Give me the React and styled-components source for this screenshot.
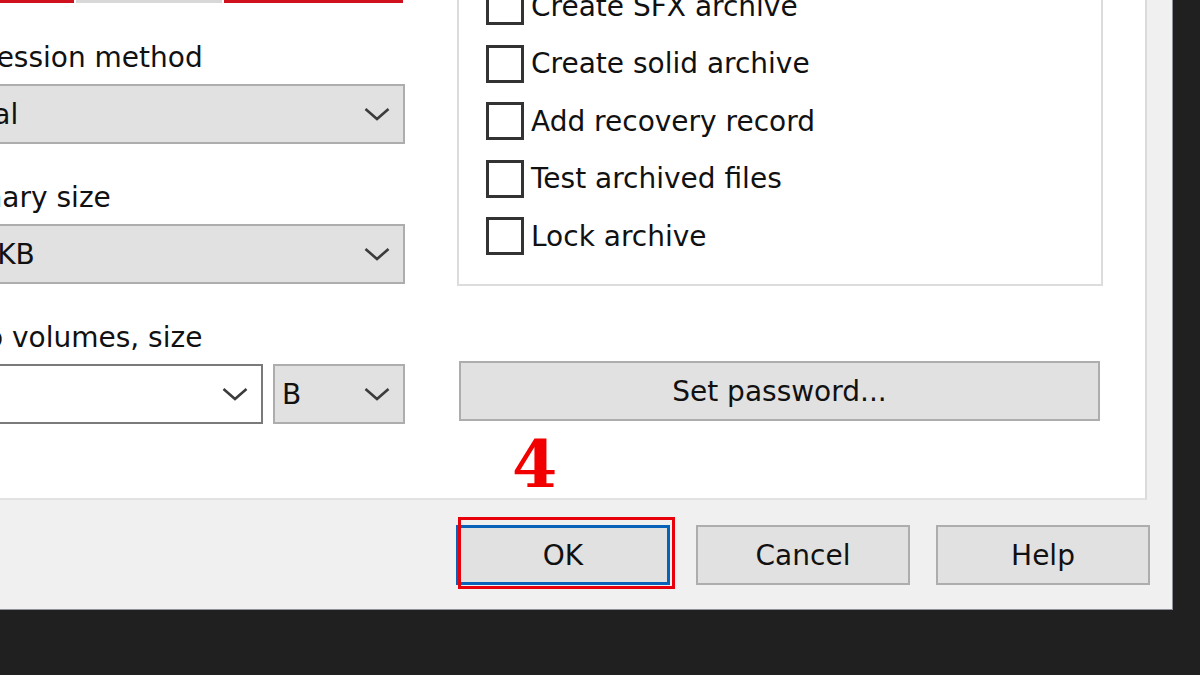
import React from "react";
import styled, { createGlobalStyle } from "styled-components";

const GlobalStyle = createGlobalStyle`
  html, body {
    margin: 0;
    padding: 0;
    background: #202020;
    overflow: hidden;
  }
  body {
    font-family: "DejaVu Sans", "Noto Sans", sans-serif;
    color: #111;
  }
`;

const Viewport = styled.div`
  width: 1200px;
  height: 675px;
  overflow: hidden;
  background: #202020;
`;

// dialog is cropped: shifted up/left out of the frame
const Dialog = styled.div`
  position: relative;
  width: 1263px;
  height: 650px;
  margin: -40px 0 0 -90px;
  background: #f0f0f0;
  border-right: 1px solid #8d9097;
  border-bottom: 1px solid #8d9097;
  display: flex;
  flex-direction: column;
  box-sizing: border-box;
`;

const Panel = styled.div`
  width: 1237px;
  height: 540px;
  background: #fff;
  border-right: 2px solid #dadada;
  border-bottom: 2px solid #e2e2e2;
  box-sizing: border-box;
  display: flex;
`;

const LeftColumn = styled.div`
  width: 495px;
  padding-top: 81px;
  display: flex;
  flex-direction: column;
`;

const Field = styled.div`
  display: flex;
  flex-direction: column;
  margin-bottom: 37px;
`;

const Label = styled.div`
  font-size: 28px;
  line-height: 34px;
  margin: 0 0 9px -6px;
  white-space: nowrap;
`;

const Select = styled.div`
  height: 60px;
  box-sizing: border-box;
  width: ${(p) => p.$width || "100%"};
  background: ${(p) => (p.$editable ? "#fff" : "#e1e1e1")};
  border: 2px solid ${(p) => (p.$editable ? "#7a7a7a" : "#adadad")};
  display: flex;
  align-items: center;
  justify-content: space-between;
  padding: 0 13px 0 ${(p) => p.$indent ?? 5}px;
  font-size: 28px;
  white-space: nowrap;
`;

const ComboRow = styled.div`
  display: flex;
  gap: 10px;
`;

const RightColumn = styled.div`
  width: 646px;
  margin-left: 52px;
  display: flex;
  flex-direction: column;
`;

const GroupBox = styled.div`
  border: 2px solid #dcdcdc;
  border-top: none;
  padding: 27px 0 29px 27px;
  display: flex;
  flex-direction: column;
  gap: 19.5px;
`;

const CheckRow = styled.label`
  display: flex;
  align-items: center;
  gap: 7px;
  height: 38px;
  font-size: 28px;
  white-space: nowrap;
`;

const Box = styled.span`
  width: 38px;
  height: 38px;
  box-sizing: border-box;
  border: 3px solid #333;
  background: #fff;
  flex: none;
`;

const WideButton = styled.div`
  margin: 75px 0 0 2px;
  width: 641px;
  height: 60px;
  box-sizing: border-box;
  background: #e1e1e1;
  border: 2px solid #adadad;
  display: flex;
  align-items: center;
  justify-content: center;
  font-size: 28px;
`;

const Footer = styled.div`
  display: flex;
  justify-content: flex-end;
  gap: 26px;
  padding: 25px 22px 0 0;
`;

const Button = styled.div`
  position: relative;
  width: 214px;
  height: 60px;
  box-sizing: border-box;
  background: #e1e1e1;
  border: ${(p) => (p.$focused ? "3px solid #0a62b8" : "2px solid #adadad")};
  display: flex;
  align-items: center;
  justify-content: center;
  font-size: 28px;
`;

const Highlight = styled.div`
  position: absolute;
  top: -11px;
  left: -1px;
  right: -8px;
  bottom: -7px;
  border: 3px solid #e8000b;
  pointer-events: none;
`;

const TopMark = styled.div`
  position: absolute;
  top: 0;
  left: ${(p) => p.$left}px;
  width: ${(p) => p.$width}px;
  height: 43px;
  border-bottom: 3px solid ${(p) => p.$color};
  box-sizing: border-box;
`;

const StepNumber = styled.div`
  position: absolute;
  left: 602px;
  top: 472px;
  font-family: "DejaVu Serif", "Liberation Serif", serif;
  font-weight: bold;
  font-size: 65px;
  line-height: 65px;
  color: #f20000;
`;

function Chevron() {
  return (
    <svg width="26" height="14" viewBox="0 0 26 14">
      <polyline
        points="1.5,2 13,12 24.5,2"
        fill="none"
        stroke="#3c3c3c"
        strokeWidth="2.6"
      />
    </svg>
  );
}

const options = [
  "Create SFX archive",
  "Create solid archive",
  "Add recovery record",
  "Test archived files",
  "Lock archive",
];

export default function App() {
  return (
    <Viewport>
      <GlobalStyle />
      <Dialog>
        <Panel>
          <LeftColumn>
            <Field>
              <Label>Compression method</Label>
              <Select>
                <span>Normal</span>
                <Chevron />
              </Select>
            </Field>
            <Field>
              <Label>Dictionary size</Label>
              <Select>
                <span>4096 KB</span>
                <Chevron />
              </Select>
            </Field>
            <Field>
              <Label>Split to volumes, size</Label>
              <ComboRow>
                <Select $editable $width="353px">
                  <span></span>
                  <Chevron />
                </Select>
                <Select $width="132px" $indent={7}>
                  <span>B</span>
                  <Chevron />
                </Select>
              </ComboRow>
            </Field>
          </LeftColumn>
          <RightColumn>
            <GroupBox>
              {options.map((o) => (
                <CheckRow key={o}>
                  <Box />
                  {o}
                </CheckRow>
              ))}
            </GroupBox>
            <WideButton>Set password...</WideButton>
          </RightColumn>
        </Panel>
        <Footer>
          <Button $focused>
            OK
            <Highlight />
          </Button>
          <Button>Cancel</Button>
          <Button>Help</Button>
        </Footer>
        <TopMark $left={40} $width={124} $color="#d0101c" />
        <TopMark $left={166} $width={146} $color="#d8d8d8" />
        <TopMark $left={314} $width={179} $color="#d0101c" />
        <StepNumber>4</StepNumber>
      </Dialog>
    </Viewport>
  );
}
